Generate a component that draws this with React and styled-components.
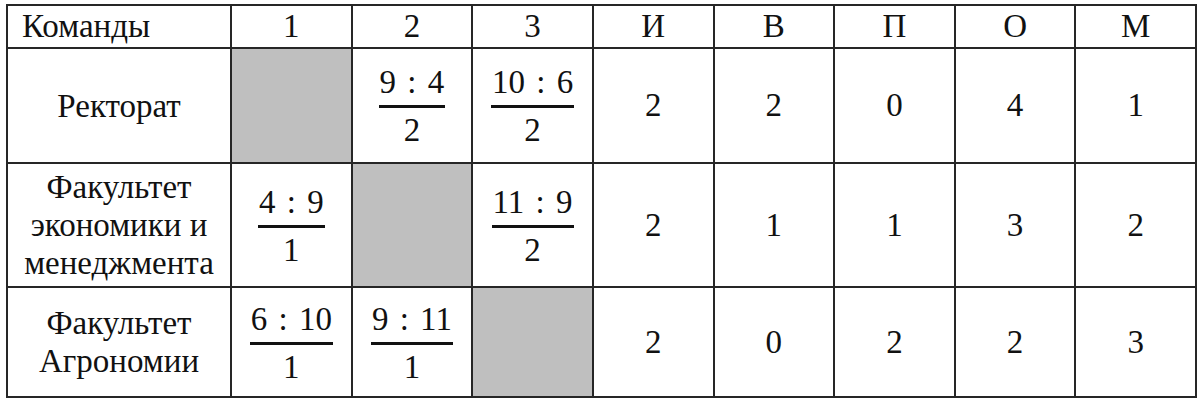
import styled, { createGlobalStyle } from "styled-components";

const serif = `"Liberation Serif", "Times New Roman", Times, "Nimbus Roman", "FreeSerif", "Noto Serif", "DejaVu Serif", serif`;

const GlobalStyle = createGlobalStyle`
    body {
        margin: 0;
        background: #ffffff;
        font-family: ${serif};
        color: #111;
    }
`;

const teams = [
    {
        name: ["Ректорат"],
        games: [null, ["9 : 4", "2"], ["10 : 6", "2"]],
        stats: [2, 2, 0, 4, 1],
    },
    {
        name: ["Факультет", "экономики и", "менеджмента"],
        games: [["4 : 9", "1"], null, ["11 : 9", "2"]],
        stats: [2, 1, 1, 3, 2],
    },
    {
        name: ["Факультет", "Агрономии"],
        games: [["6 : 10", "1"], ["9 : 11", "1"], null],
        stats: [2, 0, 2, 2, 3],
    },
];

const headers = ["1", "2", "3", "И", "В", "П", "О", "М"];
const rowHeights = [115, 124, 110];

function App() {
    return (
        <Page>
            <GlobalStyle />
            <Table>
                <colgroup>
                    <col style={{ width: 224 }} />
                    {headers.map((h) => (
                        <col key={h} />
                    ))}
                </colgroup>
                <thead>
                    <Row height={43}>
                        <HeadCell align="left">Команды</HeadCell>
                        {headers.map((h) => (
                            <HeadCell key={h}>{h}</HeadCell>
                        ))}
                    </Row>
                </thead>
                <tbody>
                    {teams.map((team, i) => (
                        <Row key={i} height={rowHeights[i]}>
                            <NameCell>
                                {team.name.map((line) => (
                                    <div key={line}>{line}</div>
                                ))}
                            </NameCell>
                            {team.games.map((g, j) =>
                                g ? (
                                    <Cell key={j}>
                                        <Fraction>
                                            <span className="top">{g[0]}</span>
                                            <span className="bottom">{g[1]}</span>
                                        </Fraction>
                                    </Cell>
                                ) : (
                                    <Cell key={j} empty />
                                )
                            )}
                            {team.stats.map((s, j) => (
                                <Cell key={"s" + j}>{s}</Cell>
                            ))}
                        </Row>
                    ))}
                </tbody>
            </Table>
        </Page>
    );
}

export default App;

const Page = styled.div`
    padding: 4px 0 0 6px;
`;

const Table = styled.table`
    border-collapse: collapse;
    table-layout: fixed;
    width: 1191px;
    font-family: ${serif};
    font-size: 33px;
    color: #111;
`;

const Row = styled.tr`
    height: ${(props) => props.height}px;
`;

const HeadCell = styled.th`
    border: 2px solid #262626;
    font-family: ${serif};
    font-size: 33px;
    font-weight: 400;
    text-align: ${(props) => props.align || "center"};
    padding: 0 0 0 ${(props) => (props.align === "left" ? "14px" : "0")};
    line-height: 1;
    vertical-align: middle;
`;

const Cell = styled.td`
    border: 2px solid #262626;
    font-family: ${serif};
    font-size: 33px;
    text-align: center;
    vertical-align: middle;
    padding: 0;
    background: ${(props) => (props.empty ? "#bfbfbf" : "#ffffff")};
`;

const NameCell = styled(Cell)`
    line-height: 38px;
`;

const Fraction = styled.span`
    display: inline-flex;
    flex-direction: column;
    align-items: stretch;
    font-size: 33px;
    line-height: 34px;
    word-spacing: 3px;

    .top {
        padding: 0 1px 6px;
        border-bottom: 3px solid #111;
    }

    .bottom {
        padding-top: 5px;
    }
`;
